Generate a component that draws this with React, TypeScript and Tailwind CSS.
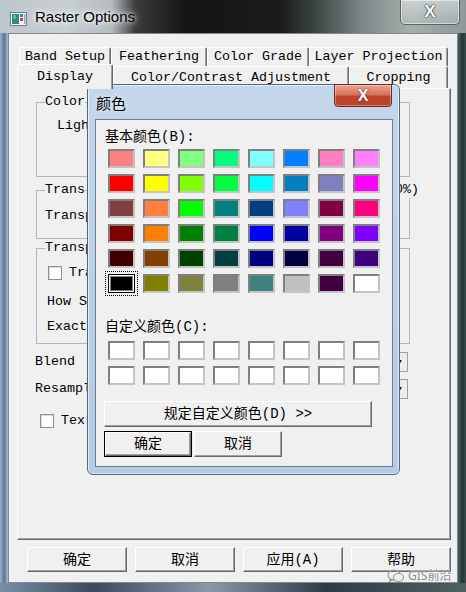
import React from "react";

const basicColors = [
  ["#ff8080", "#ffff80", "#80ff80", "#00ff80", "#80ffff", "#0080ff", "#ff80c0", "#ff80ff"],
  ["#ff0000", "#ffff00", "#80ff00", "#00ff40", "#00ffff", "#0080c0", "#8080c0", "#ff00ff"],
  ["#804040", "#ff8040", "#00ff00", "#008080", "#004080", "#8080ff", "#800040", "#ff0080"],
  ["#800000", "#ff8000", "#008000", "#008040", "#0000ff", "#0000a0", "#800080", "#8000ff"],
  ["#400000", "#804000", "#004000", "#004040", "#000080", "#000040", "#400040", "#400080"],
  ["#000000", "#808000", "#808040", "#808080", "#408080", "#c0c0c0", "#400040", "#ffffff"],
];

function Btn({
  children,
  className = "",
  isDefault = false,
}: {
  children: React.ReactNode;
  className?: string;
  isDefault?: boolean;
}) {
  return (
    <div className={`bg-[#f0f0f0] ${isDefault ? "border border-black" : ""} ${className}`}>
      <div className="flex h-full w-full items-center justify-center border border-t-white border-l-white border-r-[#696969] border-b-[#696969] shadow-[inset_-1px_-1px_0_#a0a0a0]">
        {children}
      </div>
    </div>
  );
}

function Tab({ label, w, selected = false }: { label: string; w: string; selected?: boolean }) {
  return (
    <div
      className={`flex shrink-0 items-center justify-center rounded-t-[2px] border-l border-t border-r border-l-white border-t-white border-r-[#696969] bg-[#f0f0f0] shadow-[inset_-1px_0_0_#a0a0a0] ${w} ${
        selected ? "relative z-10 mb-[-1px] h-[25px] pb-[1px]" : "h-full"
      }`}
    >
      {label}
    </div>
  );
}

function Checkbox() {
  return <div className="h-[14px] w-[14px] shrink-0 border border-[#8e8f8f] bg-white shadow-[inset_1px_1px_0_#dcdcdc]" />;
}

function Combo() {
  return (
    <div className="flex h-[20px] w-[160px] border border-[#a0a0a0] bg-white">
      <div className="flex-1" />
      <div className="flex w-[15px] items-center justify-center border-l border-[#8a8a8a] bg-[#ececec] text-[9px] leading-none">▾</div>
    </div>
  );
}

function Swatch({ color, selected = false }: { color: string; selected?: boolean }) {
  if (selected) {
    return (
      <div className="h-[19px] w-[27px] outline-1 outline-offset-[2px] outline-dotted outline-black">
        <div
          className="h-full w-full border border-black shadow-[inset_0_0_0_1px_#ffffff,inset_0_0_0_2px_#808080]"
          style={{ backgroundColor: color }}
        />
      </div>
    );
  }
  return (
    <div
      className="h-[19px] w-[27px] border-2 border-t-[#7f7f7f] border-l-[#7f7f7f] border-r-[#c4c4c4] border-b-[#c4c4c4]"
      style={{ backgroundColor: color }}
    />
  );
}

export default function App() {
  return (
    <div className="relative h-[592px] w-[466px] overflow-hidden bg-[#2e3b3c] font-['Liberation_Mono','Noto_Sans_CJK_SC',monospace] text-[13.33px] leading-[16px] text-black">
      {/* title bar */}
      <div className="flex h-[33px] items-start bg-[linear-gradient(90deg,#bcc6cd_0%,#c8cfd3_14%,#b4bcc0_24%,#3a3c3d_29%,#131415_40%,#1a1b1b_60%,#3d4645_68%,#7d8a89_78%,#a3adac_88%,#8d9a99_100%)]">
        <svg className="ml-[10px] mt-[12px]" width="17" height="14" viewBox="0 0 17 14">
          <rect x="0.5" y="0.5" width="16" height="13" fill="#f4f6f8" stroke="#6f7f90" />
          <rect x="2" y="2" width="7" height="10" fill="#2f8a7a" />
          <rect x="3" y="3" width="3" height="4" fill="#58b8a0" />
          <rect x="10" y="2" width="3" height="3" fill="#3a7fd0" />
          <rect x="10" y="6" width="3" height="3" fill="#c94040" />
          <rect x="14" y="2" width="1.5" height="10" fill="#9aa8b8" />
        </svg>
        <span className="ml-[8px] mt-[8px] font-['Liberation_Sans',sans-serif] text-[15px] leading-[18px] [text-shadow:0_0_8px_#ffffff,0_0_4px_#ffffff]">
          Raster Options
        </span>
        <div className="ml-auto mr-[6px] flex h-[25px] w-[60px] items-center justify-center rounded-b-[5px] border border-t-0 border-[#5a6464] bg-[linear-gradient(180deg,rgba(255,255,255,0.45),rgba(255,255,255,0.15))] shadow-[inset_0_0_0_1px_rgba(255,255,255,0.5)]">
          <span className="font-['Liberation_Sans',sans-serif] text-[17px] font-bold text-white [text-shadow:0_0_2px_#202020,0_0_1px_#000]">
            X
          </span>
        </div>
      </div>

      <div className="flex h-[550px]">
        <div className="w-[8px] bg-[linear-gradient(90deg,#9db0c8,#5d7598_55%,#aabcd2)]" />
        <div className="flex h-[550px] w-[450px] flex-col border border-[#7d8a96] bg-[#f0f0f0]">
          {/* tab control */}
          <div className="ml-[8px] mt-[13px] w-[434px]">
            <div className="flex h-[19px] pl-[2px]">
              <Tab label="Band Setup" w="w-[92px]" />
              <Tab label="Feathering" w="w-[96px]" />
              <Tab label="Color Grade" w="w-[102px]" />
              <Tab label="Layer Projection" w="w-[139px]" />
            </div>
            <div className="flex h-[22px] items-end">
              <Tab label="Display" w="w-[96px]" selected />
              <Tab label="Color/Contrast Adjustment" w="w-[236px]" />
              <Tab label="Cropping" w="w-[99px]" />
            </div>
            <div className="h-[452px] border border-t-white border-l-white border-r-[#696969] border-b-[#696969] pl-[18px] pt-[5px] shadow-[inset_-1px_-1px_0_#a0a0a0]">
              <fieldset className="h-[83px] w-[374px] border border-[#b5b5b5]">
                <legend className="ml-[8px] px-0">Color</legend>
                <div className="ml-[20px] mt-[8px]">Light</div>
              </fieldset>
              <fieldset className="relative mt-[5px] h-[57px] w-[374px] border border-[#b5b5b5]">
                <legend className="ml-[8px] px-0">Trans</legend>
                <div className="ml-[8px] mt-[10px]">Transp</div>
                <span className="absolute right-[-10px] top-[-16px] bg-[#f0f0f0]">(0%)</span>
              </fieldset>
              <fieldset className="mt-[1px] h-[104px] w-[374px] border border-[#b5b5b5]">
                <legend className="ml-[8px] px-0">Transp</legend>
                <div className="ml-[11px] mt-[9px] flex items-center gap-[7px]">
                  <Checkbox />
                  <span>Tra</span>
                </div>
                <div className="ml-[10px] mt-[13px]">How S</div>
                <div className="ml-[10px] mt-[9px]">Exact</div>
              </fieldset>
              <div className="ml-[-1px] mt-[8px] flex h-[20px] w-[373px] items-center justify-between">
                <span>Blend</span>
                <Combo />
              </div>
              <div className="ml-[-1px] mt-[7px] flex h-[20px] w-[373px] items-center justify-between">
                <span>Resampl</span>
                <Combo />
              </div>
              <div className="ml-[4px] mt-[14px] flex items-center gap-[7px]">
                <Checkbox />
                <span>Tex</span>
              </div>
            </div>
          </div>

          {/* main buttons */}
          <div className="ml-[18px] mt-[7px] flex gap-[8px] font-['Liberation_Mono','Noto_Sans_CJK_SC',monospace] text-[14px]">
            <Btn className="h-[25px] w-[100px]">确定</Btn>
            <Btn className="h-[25px] w-[100px]">取消</Btn>
            <Btn className="h-[25px] w-[100px]">应用(A)</Btn>
            <Btn className="h-[25px] w-[100px]">帮助</Btn>
          </div>
        </div>
        <div className="w-[8px] bg-[linear-gradient(90deg,#4a5e5c,#243634_60%,#3c4e4c)]" />
      </div>
      <div className="h-[9px] bg-[linear-gradient(90deg,#7a8ea8,#3b4a5c_20%,#8a98a8_45%,#2e3a48_70%,#50605c)]" />

      {/* watermark */}
      <div className="absolute left-[387px] top-[569px] flex items-center gap-[3px] font-['Noto_Sans','Noto_Sans_CJK_SC',sans-serif] text-[12px] leading-[14px] text-[#8c8c8c] [text-shadow:0_0_2px_#ffffff]">
        <svg width="18" height="14" viewBox="0 0 18 14" fill="none" stroke="#9a9a9a" strokeWidth="1.2">
          <ellipse cx="7" cy="6" rx="6" ry="4.8" />
          <path d="M3.5 10 L2.5 12.5 L6 10.6" />
          <ellipse cx="11.5" cy="8.5" rx="5" ry="4" fill="#f0f0f0" />
        </svg>
        <span>GIS前沿</span>
      </div>

      {/* 颜色 dialog */}
      <div className="absolute left-[87px] top-[84px] flex h-[391px] w-[313px] flex-col rounded-[6px] border border-[#4f6680] bg-[linear-gradient(180deg,#c4d6ea_0%,#bcd1e8_40%,#b4cbe6_100%)] shadow-[inset_0_0_0_1px_rgba(255,255,255,0.6)]">
        <div className="flex h-[34px] items-start">
          <span className="ml-[8px] mt-[9px] font-['Noto_Sans_CJK_SC',sans-serif] text-[15px] leading-[18px] [text-shadow:0_0_6px_#ffffff]">
            颜色
          </span>
          <div className="ml-auto mr-[7px] mt-[-1px] flex h-[23px] w-[58px] items-center justify-center rounded-b-[4px] border border-[#6e2a1e] bg-[linear-gradient(180deg,#e9a595_0%,#d9735d_45%,#c2412a_55%,#b8422c_100%)] shadow-[inset_0_0_0_1px_rgba(255,255,255,0.35)]">
            <span className="font-['Liberation_Sans',sans-serif] text-[16px] font-bold leading-none text-white [text-shadow:0_0_2px_#5a1a10]">
              X
            </span>
          </div>
        </div>
        <div className="ml-[7px] h-[348px] w-[298px] border border-[#6f7e8e] bg-[#f0f0f0] font-['Liberation_Mono','Noto_Sans_CJK_SC',monospace] text-[14px]">
          <div className="ml-[9px] mt-[9px] h-[16px] leading-[16px]">基本颜色(B):</div>
          <div className="ml-[12px] mt-[4px] grid grid-cols-[repeat(8,27px)] gap-x-[8px] gap-y-[6px]">
            {basicColors.map((row, r) =>
              row.map((c, i) => <Swatch key={`${r}-${i}`} color={c} selected={r === 5 && i === 0} />)
            )}
          </div>
          <div className="ml-[9px] mt-[26px] h-[16px] leading-[16px]">自定义颜色(C):</div>
          <div className="ml-[12px] mt-[6px] grid grid-cols-[repeat(8,27px)] gap-x-[8px] gap-y-[6px]">
            {Array.from({ length: 16 }).map((_, i) => (
              <Swatch key={i} color="#ffffff" />
            ))}
          </div>
          <Btn className="ml-[8px] mt-[16px] h-[26px] w-[268px]">规定自定义颜色(D) &gt;&gt;</Btn>
          <div className="ml-[8px] mt-[4px] flex gap-[2px]">
            <Btn isDefault className="h-[26px] w-[88px]">确定</Btn>
            <Btn className="h-[26px] w-[88px]">取消</Btn>
          </div>
        </div>
      </div>
    </div>
  );
}
